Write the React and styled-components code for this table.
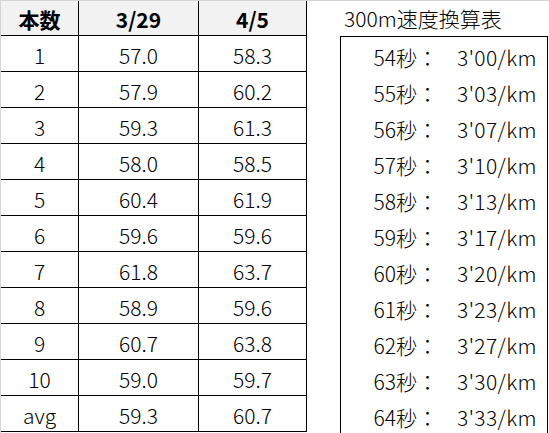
import React from 'react'
import styled, { createGlobalStyle } from 'styled-components'

const GlobalStyle = createGlobalStyle`
  html, body {
    margin: 0;
    padding: 0;
    background: #ffffff;
  }
  body {
    font-family: "Noto Sans CJK JP", "Noto Sans", sans-serif;
    color: #000;
  }
`

const laps = [
    { n: '1', a: '57.0', b: '58.3' },
    { n: '2', a: '57.9', b: '60.2' },
    { n: '3', a: '59.3', b: '61.3' },
    { n: '4', a: '58.0', b: '58.5' },
    { n: '5', a: '60.4', b: '61.9' },
    { n: '6', a: '59.6', b: '59.6' },
    { n: '7', a: '61.8', b: '63.7' },
    { n: '8', a: '58.9', b: '59.6' },
    { n: '9', a: '60.7', b: '63.8' },
    { n: '10', a: '59.0', b: '59.7' },
    { n: 'avg', a: '59.3', b: '60.7' },
]

const paces = [
    ['54', "3'00"], ['55', "3'03"], ['56', "3'07"], ['57', "3'10"],
    ['58', "3'13"], ['59', "3'17"], ['60', "3'20"], ['61', "3'23"],
    ['62', "3'27"], ['63', "3'30"], ['64', "3'33"],
]

const Page = styled.div`
    display: flex;
    align-items: flex-start;
    width: 549px;
    height: 433px;
    border-top: 1px solid #d4d4d4;
    border-left: 1px solid #d4d4d4;
    box-sizing: border-box;
    overflow: hidden;
`

const Grid = styled.div`
    display: grid;
    grid-template-columns: 78px 120px 108px;
    grid-template-rows: 35px repeat(11, 36px);
`

const Cell = styled.div`
    display: flex;
    align-items: center;
    justify-content: center;
    box-sizing: border-box;
    border-right: 1px solid #000;
    border-bottom: 1px solid #000;
    font-size: 21px;
    line-height: 1;
    padding-top: 3px;
    background: ${p => (p.$head ? '#f2f2f2' : '#fff')};
    font-weight: ${p => (p.$head ? 700 : 300)};
`

const Side = styled.div`
    display: flex;
    flex-direction: column;
    margin-left: 33px;
`

const Title = styled.div`
    height: 35px;
    padding-left: 4px;
    font-size: 21px;
    font-weight: 300;
    line-height: 35px;
    white-space: nowrap;
`

const Box = styled.div`
    width: 208px;
    border: 1px solid #000;
    box-sizing: border-box;
    display: grid;
    grid-template-columns: 97px 1fr;
    grid-auto-rows: 36px;
    font-size: 21px;
    font-weight: 300;
`

const Label = styled.div`
    display: flex;
    align-items: center;
    justify-content: flex-end;
    padding-top: 3px;
    white-space: nowrap;
`

const Value = styled.div`
    display: flex;
    align-items: center;
    padding-left: 19px;
    padding-top: 3px;
    letter-spacing: 0.4px;
    white-space: nowrap;
`

export default function App() {
    return (
        <>
            <GlobalStyle />
            <Page>
                <Grid>
                    <Cell $head>本数</Cell>
                    <Cell $head>3/29</Cell>
                    <Cell $head>4/5</Cell>
                    {laps.map(row => (
                        <React.Fragment key={row.n}>
                            <Cell>{row.n}</Cell>
                            <Cell>{row.a}</Cell>
                            <Cell>{row.b}</Cell>
                        </React.Fragment>
                    ))}
                </Grid>
                <Side>
                    <Title>300m速度換算表</Title>
                    <Box>
                        {paces.map(([sec, pace]) => (
                            <React.Fragment key={sec}>
                                <Label>{sec}秒：</Label>
                                <Value>{pace}/km</Value>
                            </React.Fragment>
                        ))}
                    </Box>
                </Side>
            </Page>
        </>
    )
}
